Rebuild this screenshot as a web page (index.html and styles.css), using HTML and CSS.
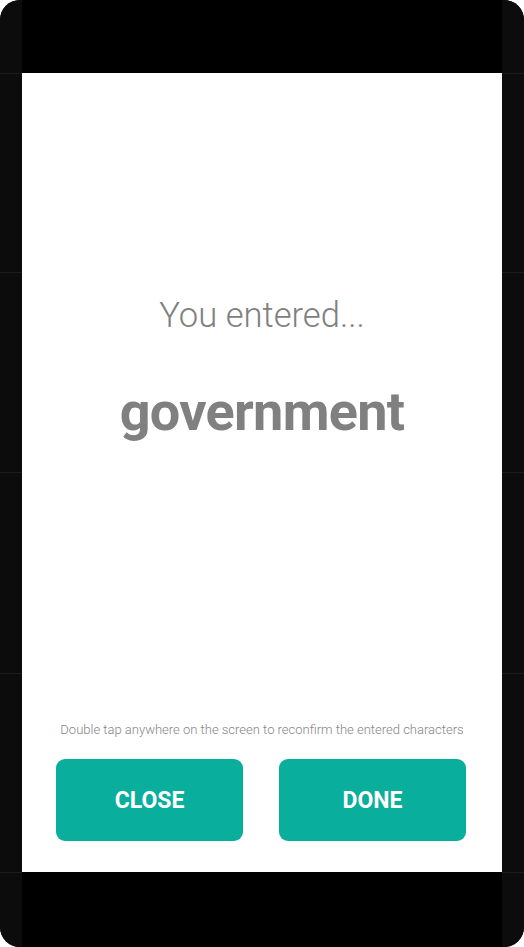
FILE: index.html
```html
<!DOCTYPE html>
<html lang="en">
<head>
<meta charset="utf-8">
<title>You entered</title>
<link rel="stylesheet" href="styles.css">
</head>
<body>
<div class="device">
  <div class="side">
    <div class="seg seg-a"></div>
    <div class="seg seg-b"></div>
    <div class="seg seg-c"></div>
    <div class="seg seg-d"></div>
    <div class="seg seg-e"></div>
    <div class="seg seg-f"></div>
  </div>
  <div class="center">
    <div class="bezel-top"></div>
    <main class="screen">
      <div class="result">
        <p class="lead">You entered...</p>
        <p class="word">government</p>
      </div>
      <div class="actions">
        <p class="hint">Double tap anywhere on the screen to reconfirm the entered characters</p>
        <div class="buttons">
          <button class="btn">CLOSE</button>
          <button class="btn">DONE</button>
        </div>
      </div>
    </main>
    <div class="bezel-bottom"></div>
  </div>
  <div class="side">
    <div class="seg seg-a"></div>
    <div class="seg seg-b"></div>
    <div class="seg seg-c"></div>
    <div class="seg seg-d"></div>
    <div class="seg seg-e"></div>
    <div class="seg seg-f"></div>
  </div>
</div>
</body>
</html>
```
FILE: styles.css
```css
html, body {
  margin: 0;
  padding: 0;
  background: #ffffff;
}

body {
  font-family: Roboto, "Liberation Sans", sans-serif;
}

.device {
  width: 524px;
  height: 947px;
  display: flex;
  border-radius: 20px;
  overflow: hidden;
  background: #0c0c0c;
}

.side {
  width: 22px;
  display: flex;
  flex-direction: column;
  background: #0c0c0c;
}

.seg {
  box-sizing: border-box;
  flex: none;
}

.seg-a { height: 73px; }
.seg-b { height: 199px; border-top: 1px solid #1d1d1d; }
.seg-c { height: 200px; border-top: 1px solid #1d1d1d; }
.seg-d { height: 201px; border-top: 1px solid #1d1d1d; }
.seg-e { height: 199px; border-top: 1px solid #1d1d1d; }
.seg-f { flex: 1; border-top: 1px solid #1d1d1d; }

.center {
  width: 480px;
  display: flex;
  flex-direction: column;
}

.bezel-top {
  height: 73px;
  background: #000000;
}

.bezel-bottom {
  flex: 1;
  background: #000000;
}

.screen {
  height: 799px;
  background: #ffffff;
  display: flex;
  flex-direction: column;
}

.result {
  padding-top: 222px;
  text-align: center;
  color: #808080;
}

.lead {
  margin: 0;
  font-size: 34.6px;
  line-height: 40px;
  font-weight: 300;
}

.word {
  margin: 45px 0 0;
  font-size: 54px;
  line-height: 64px;
  font-weight: 700;
  letter-spacing: -0.7px;
}

.actions {
  margin-top: auto;
  padding-bottom: 31px;
}

.hint {
  margin: 0;
  text-align: center;
  font-size: 13px;
  line-height: 16px;
  font-weight: 300;
  color: #858585;
}

.buttons {
  margin-top: 21px;
  padding: 0 36px 0 34px;
  display: flex;
  gap: 36px;
}

.btn {
  width: 187px;
  height: 82px;
  border: none;
  border-radius: 9px;
  background: #0aae9c;
  color: #ffffff;
  font-family: Roboto, "Liberation Sans", sans-serif;
  font-size: 23px;
  font-weight: 700;
  padding: 0;
}
```
